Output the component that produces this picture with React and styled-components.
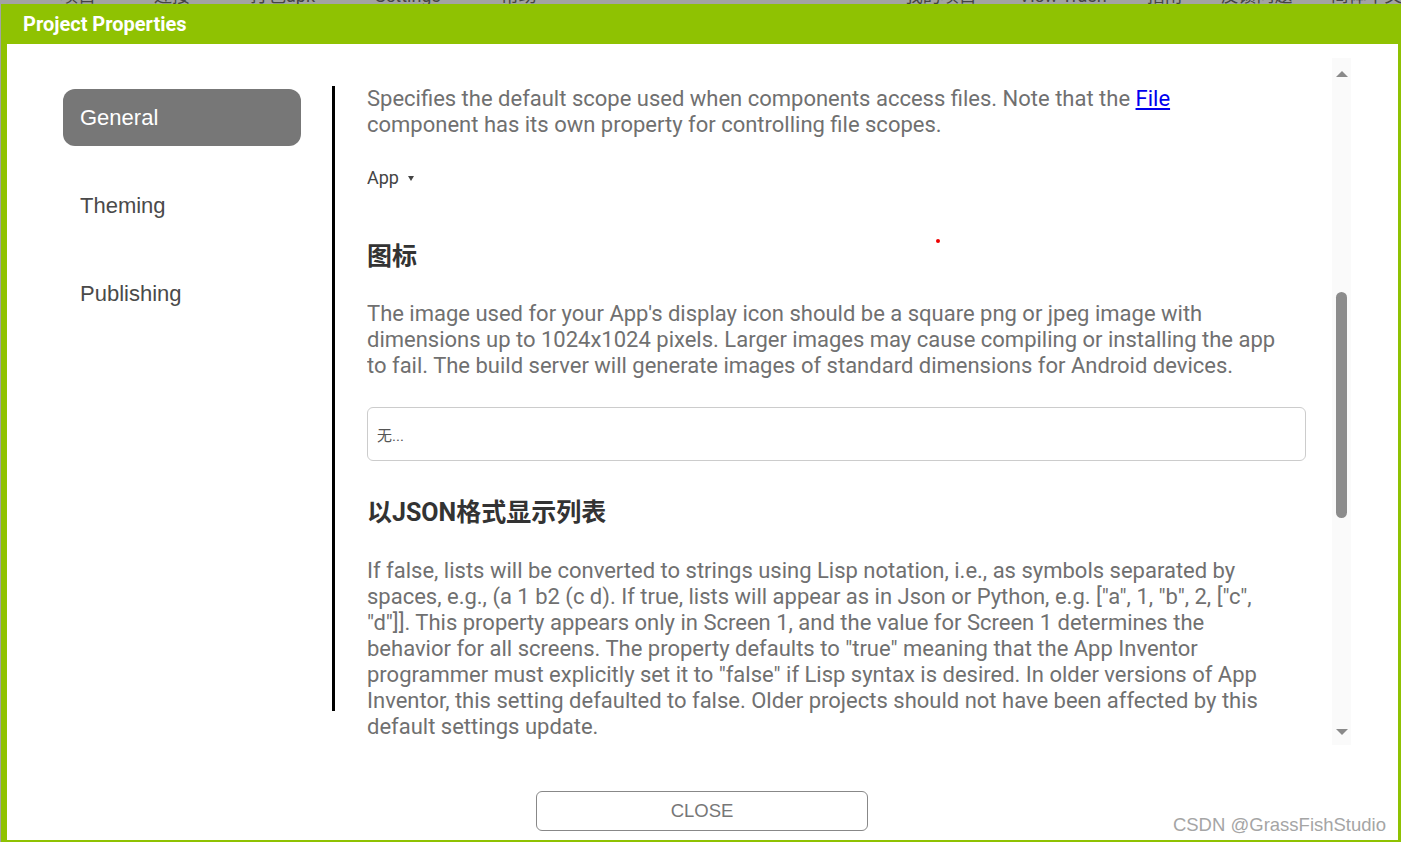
import React from 'react';

import styled, { createGlobalStyle } from 'styled-components';

const GlobalStyle = createGlobalStyle`
  html, body {
    margin: 0;
    padding: 0;
    background: #a3a3a3;
    overflow: hidden;
  }
`;

const Page = styled.div`
  width: 1401px;
  height: 842px;
  display: flex;
  flex-direction: column;
  position: relative;
`;

const MenuStrip = styled.div`
  height: 4px;
  overflow: hidden;
  display: flex;
  background: #a3a3a3;
  font-family: Roboto, 'Noto Sans CJK SC', sans-serif;
  font-size: 18px;
  color: #444;
`;

const MenuItem = styled.span`
  margin-top: -14px;
  margin-left: ${(p) => p.gap}px;
  line-height: 20px;
  white-space: nowrap;
`;

const Dialog = styled.div`
  flex: 1;
  display: flex;
  flex-direction: column;
  margin-left: 1px;
  border-left: 6px solid #8fc202;
  border-right: 3px solid #8fc202;
  border-bottom: 2px solid #8fc202;
  background: #fff;
`;

const Header = styled.div`
  height: 40px;
  background: #8fc202;
  display: flex;
  align-items: center;
  padding-left: 16px;
  font-family: Roboto, sans-serif;
  font-weight: 700;
  font-size: 20px;
  color: #fff;
`;

const Main = styled.div`
  height: 701px;
  display: flex;
`;

const Nav = styled.div`
  width: 238px;
  padding: 45px 31px 0 56px;
  display: flex;
  flex-direction: column;
  gap: 31px;
`;

const NavItem = styled.div`
  height: 57px;
  display: flex;
  align-items: center;
  padding-left: 17px;
  border-radius: 12px;
  font-family: 'Liberation Sans', Arial, sans-serif;
  font-size: 22px;
  color: ${(p) => (p.active ? '#fff' : '#4a4a4a')};
  background: ${(p) => (p.active ? '#777' : 'transparent')};
`;

const Divider = styled.div`
  width: 3px;
  height: 625px;
  margin-top: 42px;
  background: #000;
`;

const Content = styled.div`
  width: 939px;
  height: 687px;
  margin: 14px 26px 0 32px;
  overflow: hidden;
  padding-top: 28px;
  box-sizing: border-box;
  font-family: Roboto, 'Noto Sans CJK SC', sans-serif;
`;

const Text = styled.p`
  max-width: 916px;
  margin: ${(p) => p.top || 0}px 0 0;
  font-size: 22px;
  line-height: 26px;
  color: #707070;
`;

const Link = styled.a`
  color: #0000ee;
  text-decoration: underline;
`;

const Dropdown = styled.div`
  margin-top: 27px;
  height: 24px;
  display: flex;
  align-items: center;
  gap: 9px;
  font-size: 18px;
  color: #444;
`;

const Caret = styled.span`
  width: 0;
  height: 0;
  border-left: 3px solid transparent;
  border-right: 3px solid transparent;
  border-top: 5px solid #444;
  margin-top: 2px;
`;

const Heading = styled.h3`
  margin: ${(p) => p.top}px 0 0;
  font-size: 25px;
  line-height: 32px;
  font-weight: 700;
  color: #333;
`;

const FileInput = styled.div`
  margin-top: 28px;
  height: 54px;
  box-sizing: border-box;
  border: 1px solid #ccc;
  border-radius: 6px;
  display: flex;
  align-items: center;
  padding-left: 9px;
  font-size: 15px;
  color: #555;
`;

const ScrollTrack = styled.div`
  width: 19px;
  height: 687px;
  margin-top: 14px;
  background: #fafafa;
  display: flex;
  flex-direction: column;
  align-items: center;
`;

const Arrow = styled.span`
  width: 0;
  height: 0;
  border-left: 6px solid transparent;
  border-right: 6px solid transparent;
  ${(p) => (p.down ? 'border-top: 6px solid #8a8a8a;' : 'border-bottom: 6px solid #8a8a8a;')}
  margin-top: ${(p) => p.top}px;
`;

const Thumb = styled.div`
  width: 11px;
  border-radius: 6px;
  background: #8c8c8c;
`;

const Footer = styled.div`
  display: flex;
  justify-content: center;
  padding-top: 46px;
`;

const CloseButton = styled.button`
  width: 332px;
  height: 40px;
  border: 1px solid #888;
  border-radius: 6px;
  background: #fff;
  font-family: 'Liberation Sans', Arial, sans-serif;
  font-size: 18.5px;
  color: #777;
  margin-left: -1px;
`;

const Watermark = styled.div`
  position: absolute;
  right: 15px;
  bottom: 6px;
  font-family: 'Liberation Sans', Arial, sans-serif;
  font-size: 18.5px;
  color: #a5a5a5;
`;

const Dot = styled.div`
  position: absolute;
  left: 936px;
  top: 239px;
  width: 4px;
  height: 4px;
  border-radius: 50%;
  background: #e00;
`;

const menu = [
  ['项目', 60],
  ['连接', 58],
  ['打包apk', 60],
  ['Settings', 60],
  ['帮助', 60],
  ['我的项目', 368],
  ['View Trash', 42],
  ['指南', 40],
  ['反馈问题', 38],
  ['简体中文', 38],
];

function App() {
  const thumbTop = 292 - 58 - 22;
  const thumbHeight = 226;

  return (
    <Page>
      <GlobalStyle />
      <MenuStrip>
        {menu.map(([label, gap]) => (
          <MenuItem key={label} gap={gap}>
            {label}
          </MenuItem>
        ))}
      </MenuStrip>
      <Dialog>
        <Header>Project Properties</Header>
        <Main>
          <Nav>
            <NavItem active>General</NavItem>
            <NavItem>Theming</NavItem>
            <NavItem>Publishing</NavItem>
          </Nav>
          <Divider />
          <Content>
            <Text>
              Specifies the default scope used when components access files. Note that the{' '}
              <Link href="#">File</Link> component has its own property for controlling file
              scopes.
            </Text>
            <Dropdown>
              App <Caret />
            </Dropdown>
            <Heading top={52}>图标</Heading>
            <Text top={28}>
              The image used for your App's display icon should be a square png or jpeg image
              with dimensions up to 1024x1024 pixels. Larger images may cause compiling or
              installing the app to fail. The build server will generate images of standard
              dimensions for Android devices.
            </Text>
            <FileInput>无...</FileInput>
            <Heading top={36}>以JSON格式显示列表</Heading>
            <Text top={29}>
              If false, lists will be converted to strings using Lisp notation, i.e., as symbols
              separated by spaces, e.g., (a 1 b2 (c d). If true, lists will appear as in Json or
              Python, e.g. ["a", 1, "b", 2, ["c", "d"]]. This property appears only in Screen 1,
              and the value for Screen 1 determines the behavior for all screens. The property
              defaults to "true" meaning that the App Inventor programmer must explicitly set it
              to "false" if Lisp syntax is desired. In older versions of App Inventor, this
              setting defaulted to false. Older projects should not have been affected by this
              default settings update.
            </Text>
          </Content>
          <ScrollTrack>
            <Arrow top={13} />
            <Thumb style={{ marginTop: thumbTop - 1 + 4, height: thumbHeight }} />
            <Arrow down top={211} />
          </ScrollTrack>
        </Main>
        <Footer>
          <CloseButton>CLOSE</CloseButton>
        </Footer>
      </Dialog>
      <Dot />
      <Watermark>CSDN @GrassFishStudio</Watermark>
    </Page>
  );
}

export default App;
